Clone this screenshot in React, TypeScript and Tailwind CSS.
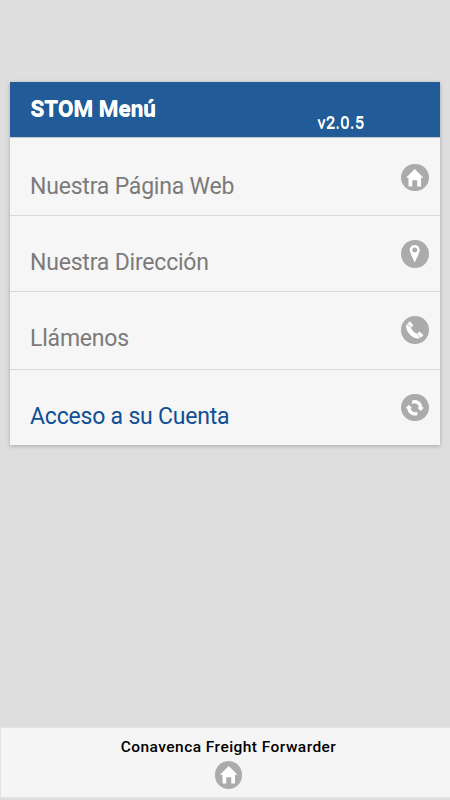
import type { ReactNode } from 'react';

const icons: Record<string, ReactNode> = {
  home: <polygon points="7,0 0,7 2,7 2,14 5,14 5,9 9,9 9,14 12,14 12,7 14,7" />,
  location: (
    <path
      fillRule="evenodd"
      d="M7,0C4.791,0,3,1.791,3,4c0,2,4,10,4,10s4-8,4-10C11,1.791,9.209,0,7,0z M7,6C5.896,6,5,5.104,5,4s0.896-2,2-2s2,0.896,2,2S8.104,6,7,6z"
    />
  ),
  phone: (
    <>
      <path d="M0.5,2.600C-0.400,4.100,0,6.400,1.500,8.700c1.300,2,3.200,3.800,5.200,4.700c1.600,0.700,3.200,0.800,4.300,0.100L8.900,9.900c-0.600,0.300-1.200,0-2-0.700C5.900,8.300,5.200,7.500,4.600,6.600C4.200,6,4,5.400,4.300,4.900z" />
      <path d="M0.900,2.200L2.500,0.700c0.400-0.400,0.900-0.300,1.200,0.100l1.900,2.300c0.300,0.400,0.300,0.800-0.100,1.100L4.600,4.800z" />
      <path d="M9.200,9.700l0.800-0.700c0.400-0.400,0.900-0.400,1.300-0.100l2.200,1.900c0.400,0.300,0.400,0.800,0,1.200l-2.100,1.400z" />
    </>
  ),
  refresh: (
    <>
      <path d="M4.900,1.100A6.200,6.200,0,0,1,13,6.700H14.500L11.700,9.500L9,6.700H10.400A3.500,3.500,0,0,0,4.900,4.100z" />
      <path d="M9.100,12.900A6.200,6.200,0,0,1,1,7.300H-0.500L2.300,4.500L5,7.300H3.600A3.500,3.500,0,0,0,9.100,9.900z" />
    </>
  ),
};

function DiscIcon({ name }: { name: string }) {
  return (
    <span className="flex h-[27.500px] w-[27.500px] shrink-0 items-center justify-center rounded-full bg-[#ababab]">
      <svg viewBox="0 0 14 14" className="h-[17.500px] w-[17.500px] overflow-visible fill-white">
        {icons[name]}
      </svg>
    </span>
  );
}

const menu = [
  { label: 'Nuestra Página Web', icon: 'home', style: 'h-[78px] border-b pt-[25.500px] text-[#7c7a7a]' },
  { label: 'Nuestra Dirección', icon: 'location', style: 'h-[76px] border-b pt-[24px] text-[#7c7a7a]' },
  { label: 'Llámenos', icon: 'phone', style: 'h-[78px] border-b pt-[24px] text-[#7c7a7a]' },
  { label: 'Acceso a su Cuenta', icon: 'refresh', style: 'h-[75px] pt-[23.500px] text-[#0f4f97]' },
];

export default function App() {
  return (
    <div className="flex h-[800px] w-[450px] flex-col overflow-hidden bg-[#dedede] font-['Roboto',sans-serif]">
      <main className="mx-2.5 mt-[82px] bg-[#f6f6f6] shadow-[0_1px_4px_rgba(0,0,0,0.25)]">
        <header className="flex h-14 items-start border-b border-[#c0c8d2] bg-[#215b98] text-white">
          <h1 className="ml-[20.500px] mt-[13px] w-[287px] text-[22.500px] leading-[26px] font-bold [text-shadow:0_1px_0_#fff]">
            STOM Menú
          </h1>
          <span className="mt-[31px] text-[16.500px] leading-[20px] tracking-[0.4px] [text-shadow:0_1px_0_#fff]">v2.0.5</span>
        </header>
        <ul>
          {menu.map((item) => (
            <li key={item.label} className={`border-[#d9d9d9] ${item.style}`}>
              <a className="flex items-start justify-between pr-[11.500px] pl-5">
                <span className="mt-[9px] text-[23px] leading-[28px] tracking-[-0.2px]">{item.label}</span>
                <DiscIcon name={item.icon} />
              </a>
            </li>
          ))}
        </ul>
      </main>

      <footer className="mt-auto mb-[2px] flex h-[71px] flex-col items-center border border-r-0 border-[#e4e4e4] bg-[#f5f5f5] pl-1.5">
        <h2 className="mt-[9px] text-[15.500px] leading-[20px] font-medium tracking-[0.45px] text-black">
          Conavenca Freight Forwarder
        </h2>
        <div className="mt-[4px]">
          <DiscIcon name="home" />
        </div>
      </footer>
    </div>
  );
}
